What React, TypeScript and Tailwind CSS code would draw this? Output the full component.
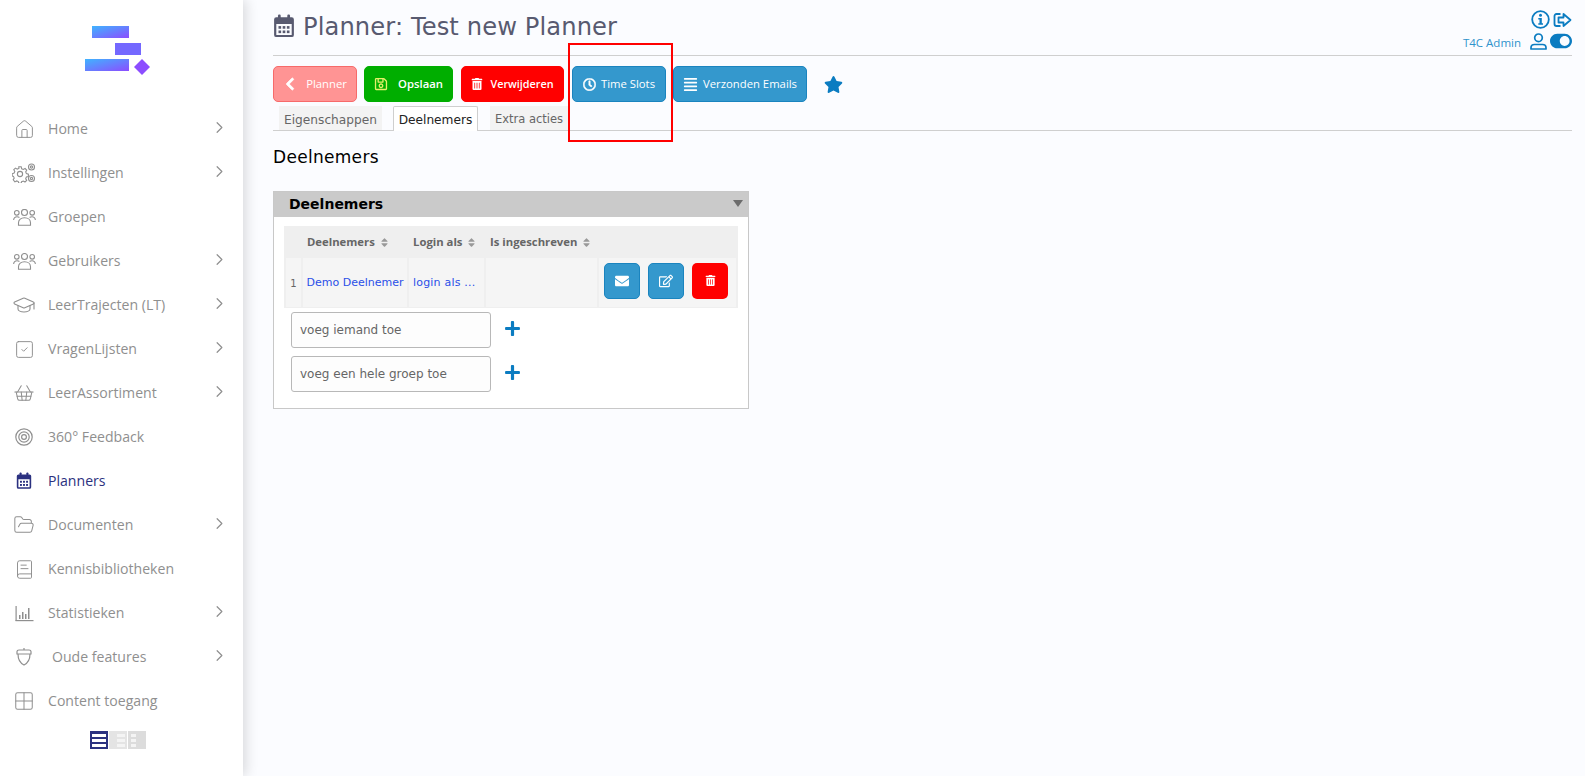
import type { ReactNode } from 'react'
import {
  BookText,
  ChevronRight,
  FolderOpen,
  GraduationCap,
  Grid2x2,
  House,
  ShoppingBasket,
  SquareCheck,
} from 'lucide-react'
import {
  FaAlignJustify,
  FaChevronLeft,
  FaEnvelope,
  FaPlus,
  FaRegClock,
  FaRegEdit,
  FaRegSave,
  FaSort,
  FaStar,
  FaToggleOn,
  FaTrashAlt,
} from 'react-icons/fa'

function Logo() {
  return (
    <svg width="66" height="52" viewBox="0 0 66 52">
      <defs>
        <linearGradient id="logoGrad" x1="0" y1="0" x2="1" y2="1">
          <stop offset="0" stopColor="#3fb4ff" />
          <stop offset="1" stopColor="#8c4dff" />
        </linearGradient>
      </defs>
      <rect x="7" y="0" width="37" height="12" fill="url(#logoGrad)" />
      <rect x="30" y="17" width="26" height="12" fill="#7468ff" />
      <rect x="0" y="33" width="44" height="12" fill="url(#logoGrad)" />
      <polygon points="57,33 65,41 57,49 49,41" fill="#8c4dff" />
    </svg>
  )
}

function Calendar({ size }: { size: number }) {
  return (
    <svg width={size} height={size * 1.1} viewBox="0 0 20 22" fill="currentColor">
      <path d="M3 3h14a2 2 0 0 1 2 2v14a2 2 0 0 1-2 2H3a2 2 0 0 1-2-2V5a2 2 0 0 1 2-2zm0 6v10h14V9z" fillRule="evenodd" />
      <rect x="4.5" y="0.5" width="2.5" height="5" rx="1" />
      <rect x="13" y="0.5" width="2.5" height="5" rx="1" />
      <rect x="5" y="11" width="2.4" height="2.4" />
      <rect x="8.8" y="11" width="2.4" height="2.4" />
      <rect x="12.6" y="11" width="2.4" height="2.4" />
      <rect x="5" y="15" width="2.4" height="2.4" />
      <rect x="8.8" y="15" width="2.4" height="2.4" />
      <rect x="12.6" y="15" width="2.4" height="2.4" />
    </svg>
  )
}

function Cogs() {
  return (
    <svg width="24" height="20" viewBox="0 0 24 20" fill="none" stroke="currentColor" strokeWidth="1.1">
      <circle cx="8" cy="11" r="2.6" />
      <path d="M6.8 3.8h2.4l.5 2 1.6.7 1.8-1 1.6 1.7-1 1.7.7 1.7 2 .5v2.4l-2 .5-.7 1.6 1 1.8-1.7 1.6-1.7-1-1.7.7-.4 1.5H6.8l-.5-1.6-1.6-.7-1.8 1L1.2 16.8l1-1.7-.7-1.7-1.3-.4v-2.3l1.9-.6.7-1.6-1-1.8 1.7-1.6 1.7 1 1.7-.7z" />
      <circle cx="19.5" cy="4" r="3" />
      <circle cx="19.5" cy="4" r="1.1" />
      <circle cx="19.5" cy="15.5" r="3" />
      <circle cx="19.5" cy="15.5" r="1.1" />
    </svg>
  )
}

function People() {
  return (
    <svg width="23" height="17" viewBox="0 0 23 17" fill="none" stroke="currentColor" strokeWidth="1.1">
      <circle cx="11.5" cy="3.5" r="3" />
      <circle cx="3.8" cy="3.8" r="2.3" />
      <circle cx="19.2" cy="3.8" r="2.3" />
      <path d="M5.5 16.3v-2.5c0-3 2.5-5 6-5s6 2 6 5v2.5z" />
      <path d="M.6 11c.3-2 1.6-3.3 3.4-3.3 1 0 1.8.3 2.4.8M22.4 11c-.3-2-1.6-3.3-3.4-3.3-1 0-1.8.3-2.4.8" />
    </svg>
  )
}

function Acorn() {
  return (
    <svg width="18" height="20" viewBox="0 0 18 20" fill="none" stroke="currentColor" strokeWidth="1.2">
      <path d="M9 1v2M2 4.5c0-1 1-1.500 2-1.500h10c1 0 2 .5 2 1.500V7H2z" />
      <path d="M3 7c0 6 2 9 6 11 4-2 6-5 6-11" />
    </svg>
  )
}

function Target() {
  return (
    <svg width="18" height="18" viewBox="0 0 18 18" fill="none" stroke="currentColor" strokeWidth="1.2">
      <circle cx="9" cy="9" r="8.2" />
      <circle cx="9" cy="9" r="5.2" />
      <circle cx="9" cy="9" r="2.4" />
    </svg>
  )
}

function Stats() {
  return (
    <svg width="19" height="17" viewBox="0 0 19 17" fill="currentColor">
      <rect x="0.5" y="1" width="1.2" height="15" />
      <rect x="0.5" y="15" width="18" height="1.2" />
      <rect x="4" y="10" width="1.5" height="4" />
      <rect x="7" y="7" width="1.5" height="7" />
      <rect x="10" y="9" width="1.5" height="5" />
      <rect x="13" y="3" width="1.5" height="11" />
    </svg>
  )
}

function InfoIcon() {
  return (
    <svg width="19" height="19" viewBox="0 0 19 19">
      <circle cx="9.5" cy="9.5" r="8.3" fill="none" stroke="currentColor" strokeWidth="1.8" />
      <circle cx="9.5" cy="5.3" r="1.5" fill="currentColor" />
      <path d="M7.3 8h3.5v5.2H12v1.500H7.3v-1.500h1.200V9.500H7.300z" fill="currentColor" />
    </svg>
  )
}

function UserIcon() {
  return (
    <svg width="17" height="17" viewBox="0 0 17 17" fill="none" stroke="currentColor" strokeWidth="1.7">
      <circle cx="8.5" cy="4.8" r="3.8" />
      <path d="M1 16v-1.200c0-2 1.500-3.300 3.500-3.300h8c2 0 3.500 1.300 3.500 3.300V16z" strokeLinejoin="round" />
    </svg>
  )
}

const thin = { strokeWidth: 1.1 }

const menu: { label: string; icon: ReactNode; arrow?: boolean; active?: boolean; indent?: boolean }[] = [
  { label: 'Home', icon: <House size={21} {...thin} />, arrow: true },
  { label: 'Instellingen', icon: <Cogs />, arrow: true },
  { label: 'Groepen', icon: <People /> },
  { label: 'Gebruikers', icon: <People />, arrow: true },
  { label: 'LeerTrajecten (LT)', icon: <GraduationCap size={24} {...thin} />, arrow: true },
  { label: 'VragenLijsten', icon: <SquareCheck size={21} {...thin} />, arrow: true },
  { label: 'LeerAssortiment', icon: <ShoppingBasket size={22} {...thin} />, arrow: true },
  { label: '360° Feedback', icon: <Target /> },
  { label: 'Planners', icon: <Calendar size={16} />, active: true },
  { label: 'Documenten', icon: <FolderOpen size={22} {...thin} />, arrow: true },
  { label: 'Kennisbibliotheken', icon: <BookText size={21} {...thin} /> },
  { label: 'Statistieken', icon: <Stats />, arrow: true },
  { label: 'Oude features', icon: <Acorn />, arrow: true, indent: true },
  { label: 'Content toegang', icon: <Grid2x2 size={22} {...thin} /> },
]

function Sidebar() {
  return (
    <aside className="flex w-[243px] shrink-0 flex-col bg-white shadow-[3px_0_12px_rgba(0,0,0,0.14)] font-['Open_Sans',sans-serif]">
      <div className="flex h-[107px] items-start justify-center pt-[26px] pr-[8px]">
        <Logo />
      </div>
      {menu.map((item) => (
        <div
          key={item.label}
          className={`flex h-[44px] items-center pr-[14px] pl-[11px] text-[14.1px] ${item.active ? 'text-[#2b3180]' : 'text-[#8f8f8f]'}`}
        >
          <span className="flex w-[26px] justify-center">{item.icon}</span>
          <span className={`flex-1 ${item.indent ? 'ml-[15px]' : 'ml-[11px]'}`}>{item.label}</span>
          {item.arrow && <ChevronRight size={19} strokeWidth={1.5} className="-mt-[3px]" />}
        </div>
      ))}
      <div className="mt-[8px] flex justify-center gap-px pr-[8px]">
        <div className="flex h-[18px] w-[18px] flex-col justify-center gap-[2px] bg-[#2b3180] px-[2px]">
          <i className="h-[3px] bg-white" />
          <i className="h-[3px] bg-white" />
          <i className="h-[3px] bg-white" />
        </div>
        <div className="flex h-[18px] w-[18px] flex-col items-end justify-center gap-[2px] bg-[#e4e4e4] px-[2px]">
          <i className="h-[3px] w-[8px] bg-[#f4f4f4]" />
          <i className="h-[3px] w-[8px] bg-[#f4f4f4]" />
          <i className="h-[3px] w-[8px] bg-[#f4f4f4]" />
        </div>
        <div className="flex h-[18px] w-[18px] flex-col justify-center gap-[2px] bg-[#dcdcdc] px-[3px]">
          <i className="h-[3px] w-[5px] bg-[#f4f4f4]" />
          <i className="h-[3px] w-[5px] bg-[#f4f4f4]" />
          <i className="h-[3px] w-[5px] bg-[#f4f4f4]" />
        </div>
      </div>
    </aside>
  )
}

function Btn({ color, icon, label, className }: { color: string; icon: ReactNode; label: string; className: string }) {
  return (
    <button className={`flex h-[36px] items-center justify-center rounded-[5px] border text-white ${color} ${className}`}>
      {icon}
      {label}
    </button>
  )
}

function Head({ label, className }: { label: string; className: string }) {
  return (
    <div className={`flex items-center gap-[4px] whitespace-nowrap pl-[5px] ${className}`}>
      {label}
      <FaSort size={11} className="text-[#999]" />
    </div>
  )
}

function AddRow({ placeholder }: { placeholder: string }) {
  return (
    <div className="flex items-center">
      <div className="flex h-[36px] w-[200px] items-center rounded-[3px] border border-[#b8b8b8] bg-[#fdfdfd] pl-[8px] text-[12px] text-[#666]">
        {placeholder}
      </div>
      <FaPlus size={17} className="mb-[3px] ml-[13px] text-[#0b7cc1]" />
    </div>
  )
}

export default function App() {
  return (
    <div className="flex h-[776px] w-[1585px] overflow-hidden bg-[#fbfcff] font-['DejaVu_Sans',sans-serif]">
      <Sidebar />
      <main className="relative min-w-0 flex-1 pt-[12px] pr-[13px] pl-[30px]">
        <div className="flex h-[44px] items-start border-b border-[#cfcfcf]">
          <span className="mt-[2px] text-[#585a70]">
            <Calendar size={22} />
          </span>
          <h1 className="ml-[8px] text-[24.2px] leading-[30px] tracking-[0.1px] text-[#585a70]">Planner: Test new Planner</h1>
          <div className="mt-[-2px] ml-auto flex flex-col items-end text-[#0b7cc1]">
            <div className="flex items-center gap-[3px]">
              <InfoIcon />
              <svg width="19" height="16" viewBox="0 0 18 16" fill="none" stroke="currentColor" strokeWidth="1.8">
                <path d="M7 2H3a2 2 0 0 0-2 2v8a2 2 0 0 0 2 2h4" />
                <path d="M10 2l7 6-7 6v-3.5H5v-5h5z" strokeLinejoin="round" />
              </svg>
            </div>
            <div className="mt-[1px] flex items-center">
              <span className="mt-[4px] mr-[9px] font-['Open_Sans',sans-serif] text-[11.5px] text-[#2f93cc]">T4C Admin</span>
              <UserIcon />
              <FaToggleOn size={22} className="ml-[3px]" />
            </div>
          </div>
        </div>

        <div className="mt-[10px] flex items-center font-['Open_Sans',sans-serif] text-[11.3px]">
          <Btn
            color="bg-[#ff9494] border-[#f76a6a]"
            className="w-[84px]"
            icon={<FaChevronLeft size={14} className="mr-[9px] stroke-[30px]" />}
            label="Planner"
          />
          <Btn
            color="bg-[#00ae00] border-[#00ae00] font-semibold"
            className="ml-[7px] w-[89px]"
            icon={<FaRegSave size={14} className="mr-[10px] text-[#e6f06a]" />}
            label="Opslaan"
          />
          <Btn
            color="bg-[#ff0000] border-[#ff0000] font-semibold text-[10.8px]"
            className="ml-[8px] w-[103px]"
            icon={<FaTrashAlt size={12} className="mr-[7px]" />}
            label="Verwijderen"
          />
          <Btn
            color="bg-[#3498cd] border-[#1a84bf]"
            className="ml-[8px] w-[94px]"
            icon={<FaRegClock size={13} className="mr-[5px] stroke-[20px]" />}
            label="Time Slots"
          />
          <Btn
            color="bg-[#3498cd] border-[#1a84bf]"
            className="ml-[7px] w-[134px]"
            icon={<FaAlignJustify size={15} className="mr-[5px]" />}
            label="Verzonden Emails"
          />
          <FaStar size={19} className="ml-[17px] text-[#0b7cc1]" />
        </div>

        <div className="mt-[4px] flex h-[25px] items-end border-b border-[#cfcfcf] pl-[6px] text-[12.2px] text-[#666]">
          <div className="flex h-[24px] w-[103px] items-center justify-center bg-[#f3f3f3] pt-[4px]">Eigenschappen</div>
          <div className="relative top-px ml-[11px] flex h-[25px] w-[85px] items-center justify-center rounded-t-[2px] border border-b-0 border-[#cfcfcf] bg-white pt-[3px] text-[#222]">
            Deelnemers
          </div>
          <div className="ml-[12px] flex h-[24px] w-[78px] items-center justify-center bg-[#f3f3f3] pt-[4px] text-[11.5px]">Extra acties</div>
        </div>

        <h2 className="mt-[15px] text-[17px] leading-[22px] tracking-[0.3px] text-black">Deelnemers</h2>

        <section className="mt-[23px] w-[476px] border border-[#c8c8c8] bg-white">
          <div className="relative flex h-[25px] items-center bg-[#cacaca] pl-[15px] text-[14px] font-bold text-black">
            Deelnemers
            <div className="absolute top-[8px] right-[5px] h-0 w-0 border-x-[5px] border-t-[7px] border-x-transparent border-t-[#6c6c6c]" />
          </div>
          <div className="mx-[10px] mt-[9px] bg-[#efefef] text-[11px] text-[#666]">
            <div className="flex h-[32px] items-center font-['Open_Sans',sans-serif] text-[11.3px] font-bold">
              <Head label="Deelnemers" className="ml-[18px] w-[106px]" />
              <Head label="Login als" className="w-[77px]" />
              <Head label="Is ingeschreven" className="w-[113px]" />
            </div>
            <div className="flex h-[50px] gap-[2px] px-[2px] pb-[1px]">
              <div className="flex w-[15px] items-center justify-center bg-[#f5f5f5] pt-[2px] text-[10px]">1</div>
              <div className="flex w-[104px] items-center justify-center whitespace-nowrap bg-[#f5f5f5] pt-[2px] text-[#2a4fe8]">Demo Deelnemer</div>
              <div className="flex w-[75px] items-center bg-[#f5f5f5] pt-[2px] pl-[4px] tracking-[0.2px] text-[#2a4fe8]">login als ...</div>
              <div className="w-[111px] bg-[#f5f5f5]" />
              <div className="flex flex-1 items-center gap-[8px] bg-[#f5f5f5] pb-[4px] pl-[5px]">
                <div className="flex h-[36px] w-[36px] items-center justify-center rounded-[5px] border border-[#1a84bf] bg-[#3498cd] text-white">
                  <FaEnvelope size={14} />
                </div>
                <div className="flex h-[36px] w-[36px] items-center justify-center rounded-[5px] border border-[#1a84bf] bg-[#3498cd] text-white">
                  <FaRegEdit size={14} />
                </div>
                <div className="flex h-[36px] w-[36px] items-center justify-center rounded-[5px] bg-[#ff0000] text-white">
                  <FaTrashAlt size={11} />
                </div>
              </div>
            </div>
          </div>
          <div className="flex flex-col gap-[8px] px-[17px] pt-[4px] pb-[16px]">
            <AddRow placeholder="voeg iemand toe" />
            <AddRow placeholder="voeg een hele groep toe" />
          </div>
        </section>

        {/* annotation drawn over the screenshot */}
        <div className="absolute top-[43px] left-[325px] h-[99px] w-[105px] border-2 border-[#ff0000]" />
      </main>
    </div>
  )
}
